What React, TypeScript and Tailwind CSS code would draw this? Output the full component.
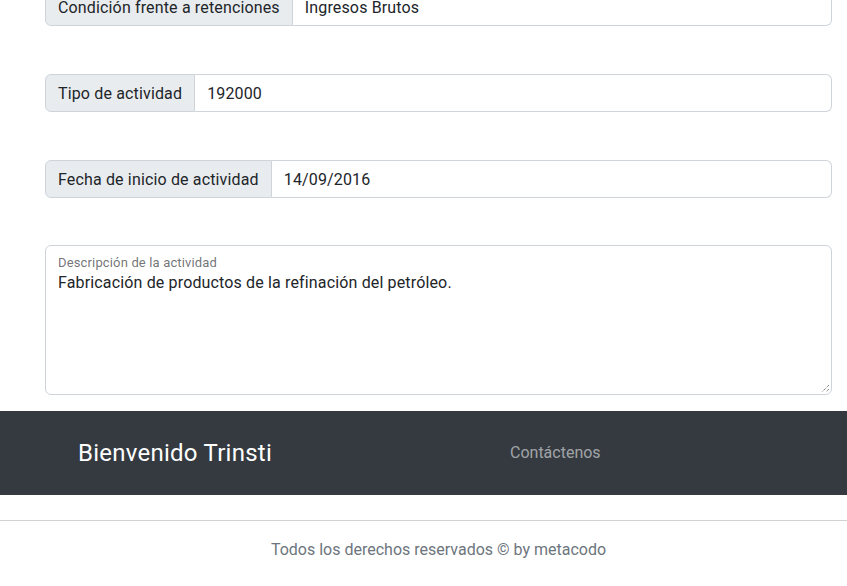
import React from "react";

const font = { fontFamily: "Roboto, 'Noto Sans', sans-serif" };

type GroupProps = {
  label: string;
  value: string;
};

const InputGroup = ({ label, value }: GroupProps) => (
  <div className="flex h-[38px] w-full text-[16px] tracking-[0.15px] text-[#212529]">
    <span className="flex items-center rounded-l-[6px] border border-[#ced4da] bg-[#e9ecef] px-3 pt-[2px] whitespace-nowrap">
      {label}
    </span>
    <div className="flex flex-1 items-center rounded-r-[6px] border border-l-0 border-[#ced4da] bg-white px-3 pt-[2px]">
      {value}
    </div>
  </div>
);

const App = () => {
  return (
    <div className="min-h-[586px] bg-white" style={font}>
      <main className="ml-[45px] mr-[15px] mt-[-12px] flex flex-col gap-12">
        <InputGroup label="Condición frente a retenciones" value="Ingresos Brutos" />
        <InputGroup label="Tipo de actividad" value="192000" />
        <InputGroup label="Fecha de inicio de actividad" value="14/09/2016" />
        <div className="relative mt-[-1px] h-[150px] rounded-[6px] border border-[#ced4da] bg-white px-3 pt-[9px] tracking-[0.15px]">
          <label className="block text-[13px] leading-[16px] text-[#212529a6]">
            Descripción de la actividad
          </label>
          <p className="text-[16px] leading-[24px] text-[#212529]">
            Fabricación de productos de la refinación del petróleo.
          </p>
          <svg className="absolute bottom-[1px] right-[1px]" width="10" height="10" viewBox="0 0 10 10">
            <path d="M9 2 L2 9 M9 6 L6 9" stroke="#555" strokeWidth="1" strokeDasharray="1 1" />
          </svg>
        </div>
      </main>

      <footer className="mt-4">
        <div className="flex h-[84px] items-center bg-[#343a40]">
          <span className="ml-[78px] w-[432px] text-[24px] tracking-[0.25px] text-white">Bienvenido Trinsti</span>
          <span className="text-[16px] text-[#ffffff8c]">Contáctenos</span>
        </div>
        <div className="mt-[25px] border-t border-[#d2d2d2] pl-[30px] pt-[17px] text-center text-[16px] text-[#6c757d]">
          Todos los derechos reservados © by metacodo
        </div>
      </footer>
    </div>
  );
};

export default App;
